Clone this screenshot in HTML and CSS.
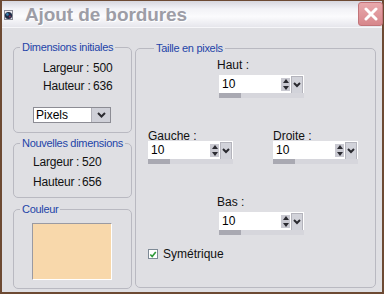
FILE: index.html
```html
<!DOCTYPE html>
<html>
  <head>
    <meta charset="utf-8" />
    <title>Ajout de bordures</title>
    <link rel="stylesheet" href="styles.css">
  </head>
  <body>
    <div class="window">
      <div class="titlebar">
        <svg class="app-icon" width="9" height="10" viewBox="0 0 9 10">
          <rect x="0.5" y="0.5" width="8" height="9" fill="#e8e8ee" stroke="#8a8a96" />
          <circle cx="4.5" cy="5.5" r="3.6" fill="#1d2b45" />
          <circle cx="3.4" cy="4.4" r="1.3" fill="#3c7fb0" />
          <circle cx="5.8" cy="6.6" r="1" fill="#8e2f55" />
        </svg>
        <span class="title">Ajout de bordures</span>
        <div class="close">
          <svg width="14" height="14" viewBox="0 0 14 14">
            <path d="M2 2 L12 12 M12 2 L2 12" stroke="#fff" stroke-width="3" stroke-linecap="round" />
          </svg>
        </div>
      </div>

      <div class="content">
        <div class="left-col">
          <fieldset class="group initial">
            <legend>Dimensions initiales</legend>
            <div class="dims">
              <span>Largeur :</span><span>500</span>
              <span>Hauteur :</span><span>636</span>
            </div>
            <div class="select">
              <span class="select-text">Pixels</span>
              <span class="select-btn">
                <svg width="9" height="6" viewBox="0 0 9 6"><path d="M1 1 L4.5 4.5 L8 1" fill="none" stroke="#2a2a30" stroke-width="2" /></svg>
              </span>
            </div>
          </fieldset>

          <fieldset class="group new">
            <legend>Nouvelles dimensions</legend>
            <div class="dims">
              <span>Largeur :</span><span>520</span>
              <span>Hauteur :</span><span>656</span>
            </div>
          </fieldset>

          <fieldset class="group colour">
            <legend>Couleur</legend>
            <div class="swatch"></div>
          </fieldset>
        </div>

        <fieldset class="group size">
          <legend>Taille en pixels</legend>

          <div class="field centre">
            <div class="field-label">Haut :</div>
            <div class="spin">
              <div class="spin-top">
                <span class="spin-text">10</span>
                <span class="spin-arrows"><i class="up"></i><i class="down"></i></span>
                <span class="spin-drop">
                  <svg width="8" height="6" viewBox="0 0 8 6"><path d="M1 1 L4 4 L7 1" fill="none" stroke="#2a2a30" stroke-width="2" /></svg>
                </span>
              </div>
              <div class="spin-track"></div>
            </div>
          </div>

          <div class="side-row">
            <div class="field">
              <div class="field-label">Gauche :</div>
              <div class="spin">
                <div class="spin-top">
                  <span class="spin-text">10</span>
                  <span class="spin-arrows"><i class="up"></i><i class="down"></i></span>
                  <span class="spin-drop">
                    <svg width="8" height="6" viewBox="0 0 8 6"><path d="M1 1 L4 4 L7 1" fill="none" stroke="#2a2a30" stroke-width="2" /></svg>
                  </span>
                </div>
                <div class="spin-track"></div>
              </div>
            </div>
            <div class="field">
              <div class="field-label">Droite :</div>
              <div class="spin">
                <div class="spin-top">
                  <span class="spin-text">10</span>
                  <span class="spin-arrows"><i class="up"></i><i class="down"></i></span>
                  <span class="spin-drop">
                    <svg width="8" height="6" viewBox="0 0 8 6"><path d="M1 1 L4 4 L7 1" fill="none" stroke="#2a2a30" stroke-width="2" /></svg>
                  </span>
                </div>
                <div class="spin-track"></div>
              </div>
            </div>
          </div>

          <div class="field centre bottom">
            <div class="field-label">Bas :</div>
            <div class="spin">
              <div class="spin-top">
                <span class="spin-text">10</span>
                <span class="spin-arrows"><i class="up"></i><i class="down"></i></span>
                <span class="spin-drop">
                  <svg width="8" height="6" viewBox="0 0 8 6"><path d="M1 1 L4 4 L7 1" fill="none" stroke="#2a2a30" stroke-width="2" /></svg>
                </span>
              </div>
              <div class="spin-track"></div>
            </div>
          </div>

          <label class="check">
            <span class="check-box">
              <svg width="9" height="9" viewBox="0 0 9 9"><path d="M1.5 4.5 L3.6 6.8 L7.6 1.8" fill="none" stroke="#2f9a3a" stroke-width="1.8" /></svg>
            </span>
            Symétrique
          </label>
        </fieldset>
      </div>
    </div>
  </body>
</html>
```

FILE: styles.css
```css
body {
  margin: 0;
  background: #dfdfe3;
  font-family: "Liberation Sans", Arial, sans-serif;
}
.window {
  width: 384px;
  height: 294px;
  box-sizing: border-box;
  border: 2px solid #6d4a33;
  border-top-width: 1px;
  background: #dfdfe3;
  display: flex;
  flex-direction: column;
}
.titlebar {
  height: 26px;
  border-bottom: 1px solid #f6f6f9;
  background: linear-gradient(#d6d6de 0, #f2f2f6 30%, #fbfbfd 60%, #e6e6ec 100%);
  display: flex;
  align-items: center;
}
.app-icon {
  margin-left: 2px;
  margin-top: 2px;
}
.title {
  margin-left: 12px;
  margin-top: 1px;
  font-size: 19px;
  font-weight: 700;
  letter-spacing: -0.1px;
  color: #9d9da6;
  text-shadow: 1px 1px 0 #ffffff;
}
.close {
  margin-left: auto;
  margin-right: -1px;
  width: 23px;
  height: 22px;
  border: 1px solid #c27479;
  border-radius: 3px;
  background: linear-gradient(#e8a9ac, #d7878c);
  display: flex;
  align-items: center;
  justify-content: center;
  align-self: flex-start;
  margin-top: 1px;
}
.content {
  flex: 1;
  display: flex;
  gap: 3px;
  padding: 13px 6px 0 11px;
}
.left-col {
  width: 119px;
  display: flex;
  flex-direction: column;
  gap: 4px;
}
.group {
  margin: 0;
  padding: 0;
  border: 1px solid #b9b9c1;
  border-radius: 5px;
  box-sizing: border-box;
  min-width: 0;
}
.group legend {
  margin-left: 6px;
  padding: 0 2px;
  font-size: 11px;
  line-height: 13px;
  letter-spacing: -0.3px;
  color: #2344a8;
}
.dims {
  display: grid;
  grid-template-columns: 50px auto;
  font-size: 12px;
  letter-spacing: -0.2px;
  white-space: nowrap;
  color: #111;
}
.initial {
  height: 92px;
}
.initial .dims {
  padding: 5px 0 0 29px;
  line-height: 18px;
}
.new {
  height: 61px;
  margin-top: 0;
}
.new .dims {
  padding: 2px 0 0 19px;
  grid-template-columns: 49px auto;
  line-height: 20px;
}
.select {
  margin: 12px 0 0 19px;
  width: 78px;
  height: 16px;
  box-sizing: border-box;
  border: 1px solid #8c8c94;
  background: #fff;
  display: flex;
  font-size: 12px;
}
.select-text {
  flex: 1;
  padding-left: 2px;
  line-height: 14px;
}
.select-btn {
  width: 18px;
  background: #cfd0d8;
  border-left: 1px solid #b0b0b8;
  display: flex;
  align-items: center;
  justify-content: center;
}
.colour {
  height: 86px;
  margin-top: 1px;
}
.swatch {
  margin: 7px 0 0 18px;
  width: 80px;
  height: 57px;
  box-sizing: border-box;
  background: #f8d8ab;
  border-top: 1px solid #9a9aa2;
  border-left: 1px solid #9a9aa2;
  border-right: 1px solid #ffffff;
  border-bottom: 1px solid #ffffff;
}
.size {
  width: 241px;
  height: 246px;
  margin-top: 1px;
  padding: 4px 0 0 12px;
}
.field-label {
  font-size: 12px;
  line-height: 13px;
  color: #111;
}
.field .spin {
  margin-top: 3px;
}
.centre {
  margin-left: 69px;
}
.centre .spin {
  margin-left: 2px;
}
.side-row {
  display: flex;
  gap: 40px;
  margin-top: 32px;
}
.side-row .spin {
  margin-top: -2px;
}
.bottom {
  margin-top: 32px;
}
.spin {
  width: 85px;
  height: 23px;
  background: #fff;
  display: flex;
  flex-direction: column;
}
.spin-top {
  height: 18px;
  display: flex;
}
.spin-text {
  flex: 1;
  padding-left: 3px;
  font-size: 12px;
  line-height: 18px;
  color: #000;
}
.spin-arrows {
  width: 9px;
  height: 13px;
  margin-top: 3px;
  background: #c9c9d1;
  display: flex;
  flex-direction: column;
  justify-content: space-around;
  align-items: center;
}
.spin-arrows i {
  width: 0;
  height: 0;
  border-left: 3px solid transparent;
  border-right: 3px solid transparent;
}
.spin-arrows .up {
  border-bottom: 4px solid #2a2a30;
}
.spin-arrows .down {
  border-top: 4px solid #2a2a30;
}
.spin-drop {
  width: 12px;
  height: 22px;
  margin: 1px 1px 0 1px;
  box-sizing: border-box;
  border: 1px solid #b4b4bc;
  background: #d2d3da;
  display: flex;
  align-items: flex-start;
  justify-content: center;
  padding-top: 5px;
}
.spin-track {
  height: 5px;
  background: linear-gradient(to right, #a9a9b2 0, #a9a9b2 22px, #d6d6dc 22px);
}
.check {
  margin-top: 12px;
  display: flex;
  align-items: center;
  gap: 5px;
  font-size: 12px;
  color: #111;
}
.check-box {
  width: 10px;
  height: 10px;
  box-sizing: border-box;
  border: 1px solid #7e8a96;
  background: #fff;
  display: flex;
  align-items: center;
  justify-content: center;
}
```
